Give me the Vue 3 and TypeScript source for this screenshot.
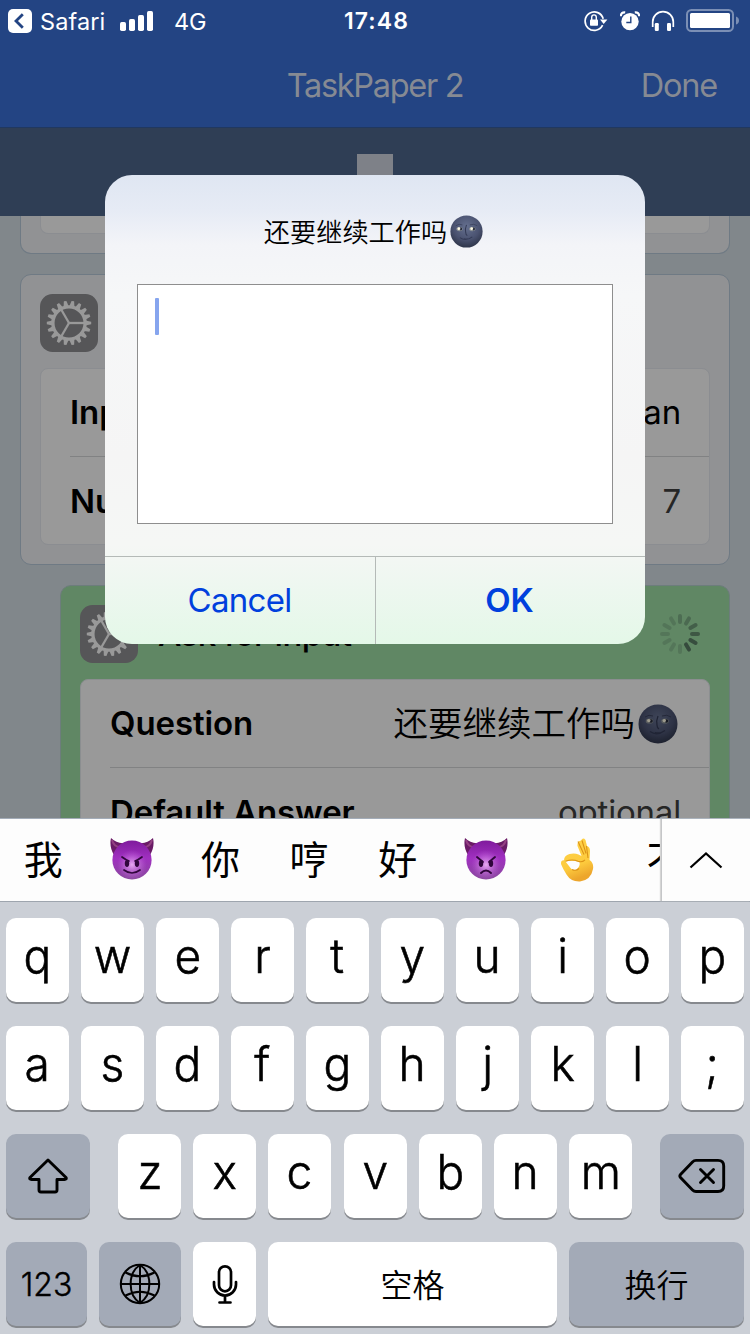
<script setup lang="ts">
const rowOne: string[] = 'qwertyuiop'.split('')
const rowTwo: string[] = 'asdfghjkl;'.split('')
const rowThree: string[] = 'zxcvbnm'.split('')

interface Candidate {
  kind: 'text' | 'devil' | 'imp' | 'hand'
  text?: string
}
const candidates: Candidate[] = [
  { kind: 'text', text: '我' },
  { kind: 'devil' },
  { kind: 'text', text: '你' },
  { kind: 'text', text: '哼' },
  { kind: 'text', text: '好' },
  { kind: 'imp' },
  { kind: 'hand' },
  { kind: 'text', text: '不' },
]

const toothAngles: number[] = Array.from({ length: 18 }, (_, i) => i * 20)
const spokeAngles: number[] = [0, 120, 240]
const spinner: { angle: number; opacity: number }[] = [
  0.32, 0.36, 0.5, 0.6, 0.72, 0.75, 0.2, 0.2, 0.2, 0.2, 0.22, 0.22,
].map((opacity, i) => ({ angle: i * 30, opacity }))
</script>

<template>
  <div class="screen">
    <svg class="defs" width="0" height="0">
      <defs>
        <radialGradient id="moonFill" cx="50%" cy="35%" r="62%">
          <stop offset="0" stop-color="#65708f" />
          <stop offset="0.65" stop-color="#4a5270" />
          <stop offset="1" stop-color="#32394f" />
        </radialGradient>
        <linearGradient id="devilFill" x1="0" y1="0" x2="0" y2="1">
          <stop offset="0" stop-color="#7f1a9c" />
          <stop offset="0.45" stop-color="#a030c0" />
          <stop offset="1" stop-color="#8a4a9e" />
        </linearGradient>
        <radialGradient id="devilGlow" cx="50%" cy="62%" r="38%">
          <stop offset="0" stop-color="#ecb0f5" stop-opacity="0.95" />
          <stop offset="1" stop-color="#c060dc" stop-opacity="0" />
        </radialGradient>
        <linearGradient id="handFill" x1="0" y1="0" x2="0.3" y2="1">
          <stop offset="0" stop-color="#ffd34a" />
          <stop offset="0.7" stop-color="#fdcb3e" />
          <stop offset="1" stop-color="#eda62c" />
        </linearGradient>
        <symbol id="moon" viewBox="0 0 40 40">
          <circle cx="20" cy="20" r="19.5" fill="url(#moonFill)" />
          <path d="M20 12q-2 5-1 9q0 3 2 4M12 27.500q7 5 15-1M17 29h5" fill="none" stroke="#333a55" stroke-width="1.3" />
          <ellipse cx="11.500" cy="17" rx="3.800" ry="2.600" fill="#8f9598" />
          <ellipse cx="27" cy="17" rx="3.800" ry="2.600" fill="#8f9598" />
          <circle cx="13" cy="17" r="1.800" fill="#252a3a" />
          <circle cx="28.500" cy="17" r="1.800" fill="#252a3a" />
          <circle cx="10.800" cy="16.600" r="1.700" fill="#fffbe5" />
          <circle cx="26.300" cy="16.600" r="1.700" fill="#fffbe5" />
          <path d="M7 13q4-3 8-1M24 12q5-2 9 1" fill="none" stroke="#3a415c" stroke-width="1" />
        </symbol>
        <symbol id="devilHead" viewBox="0 0 44 42">
          <path d="M1 0q6 6 14 5L4 17Q-1 9 1 0ZM43 0q-6 6-14 5l11 12Q45 9 43 0Z" fill="#6a1b66" />
          <path d="M2 2q2 7 8 7M42 2q-2 7-8 7" stroke="#934082" stroke-width="2" fill="none" />
          <circle cx="22" cy="22" r="19.6" fill="url(#devilFill)" />
          <circle cx="22" cy="22" r="19.6" fill="url(#devilGlow)" />
          <ellipse cx="17" cy="25.500" rx="2.200" ry="3.400" fill="#30063c" />
          <ellipse cx="27" cy="25.500" rx="2.200" ry="3.400" fill="#30063c" />
        </symbol>
      </defs>
    </svg>

    <header class="status">
      <div class="status-left">
        <svg class="back" width="24" height="24" viewBox="0 0 24 24">
          <rect width="24" height="24" rx="5" fill="#fff" />
          <path d="M14.8 5.2L8 12l6.8 6.8" fill="none" stroke="#234483" stroke-width="2.8" />
        </svg>
        <span class="safari">Safari</span>
        <svg class="signal" width="34" height="20" viewBox="0 0 34 20" fill="#fff">
          <rect x="0" y="11" width="6" height="9" rx="1.7" />
          <rect x="9" y="8" width="6" height="12" rx="1.7" />
          <rect x="18" y="4" width="6" height="16" rx="1.7" />
          <rect x="27" y="0" width="6" height="20" rx="1.7" />
        </svg>
        <span class="net">4G</span>
      </div>
      <span class="clock">17:48</span>
      <div class="status-right">
        <svg class="lock" width="24" height="22" viewBox="0 0 24 22">
          <path d="M18.6 15.2A9.2 9.2 0 1 1 19.2 8.8" fill="none" stroke="#fff" stroke-width="1.7" />
          <path d="M16 9.6h7.4L19.7 14Z" fill="#fff" />
          <rect x="6" y="9.6" width="8" height="6.2" rx="0.8" fill="#fff" />
          <path d="M7.7 10V7.2a2.3 2.3 0 0 1 4.6 0V10" fill="none" stroke="#fff" stroke-width="1.4" />
        </svg>
        <svg class="alarm" width="20" height="20" viewBox="0 0 20 20">
          <circle cx="10" cy="10.6" r="8.7" fill="#fff" />
          <path d="M.8 5.2Q1 1 5.2 1.4M19.2 5.2Q19 1 14.8 1.4" stroke="#fff" stroke-width="2.2" fill="none" />
          <path d="M10.8 5.5v6H6.3" fill="none" stroke="#234483" stroke-width="1.4" />
        </svg>
        <svg class="phones" width="24" height="22" viewBox="0 0 24 22">
          <path d="M1.7 17V12a10.2 10.2 0 0 1 20.6 0v5" fill="none" stroke="#fff" stroke-width="1.7" />
          <rect x="3.8" y="13" width="4" height="8" rx="1.2" fill="#fff" />
          <rect x="16" y="13" width="4" height="8" rx="1.2" fill="#fff" />
        </svg>
        <svg class="battery" width="54" height="24" viewBox="0 0 54 24">
          <rect x="1" y="1" width="46" height="21" rx="4.5" fill="none" stroke="#7b8fb5" stroke-width="2" />
          <rect x="4" y="4" width="40" height="15" rx="1.5" fill="#fff" />
          <path d="M50 7.5q3 1 3 4t-3 4Z" fill="#7b8fb5" />
        </svg>
      </div>
    </header>

    <nav class="nav">
      <span class="nav-title">TaskPaper 2</span>
      <span class="done">Done</span>
    </nav>
    <div class="band"><div class="stop"></div></div>

    <main class="content">
      <section class="card card-cut"><div class="panel panel-cut"></div></section>

      <section class="card">
        <div class="card-head">
          <svg class="gear" width="58" height="58" viewBox="-29 -29 58 58">
            <rect x="-29" y="-29" width="58" height="58" rx="12.5" fill="#565658" />
            <circle r="16.1" fill="none" stroke="#999" stroke-width="3.3" />
            <path v-for="a in toothAngles" :key="a" d="M16.5-2.6L22.2-1.300V1.300L16.5 2.6Z" fill="#999" :transform="`rotate(${a})`" />
            <path v-for="a in spokeAngles" :key="a" d="M0 0H15" stroke="#999" stroke-width="2.300" :transform="`rotate(${a})`" />
          </svg>
        </div>
        <div class="panel">
          <div class="field"><b>Input</b><span class="black">Mean</span></div>
          <div class="field"><b>Number</b><span>7</span></div>
        </div>
      </section>

      <section class="card running">
        <div class="card-head">
          <svg class="gear" width="58" height="58" viewBox="-29 -29 58 58">
            <rect x="-29" y="-29" width="58" height="58" rx="12.5" fill="#565658" />
            <circle r="16.1" fill="none" stroke="#999" stroke-width="3.3" />
            <path v-for="a in toothAngles" :key="a" d="M16.5-2.6L22.2-1.300V1.300L16.5 2.6Z" fill="#999" :transform="`rotate(${a})`" />
            <path v-for="a in spokeAngles" :key="a" d="M0 0H15" stroke="#999" stroke-width="2.300" :transform="`rotate(${a})`" />
          </svg>
          <span class="action">Ask for Input</span>
          <svg class="spinner" width="40" height="40" viewBox="-20 -20 40 40">
            <path v-for="s in spinner" :key="s.angle" d="M0-12V-18" stroke="#283830" stroke-width="4" stroke-linecap="round" :opacity="s.opacity" :transform="`rotate(${s.angle})`" />
          </svg>
        </div>
        <div class="panel">
          <div class="field">
            <b>Question</b>
            <span class="black cjk">还要继续工作吗<svg class="moon-lg" width="40" height="40"><use href="#moon" /></svg></span>
          </div>
          <div class="field"><b>Default Answer</b><span>optional</span></div>
        </div>
      </section>
    </main>

    <div class="keyboard">
      <div class="bar">
        <div class="candidates">
          <div v-for="(c, i) in candidates" :key="i" class="cand">
            <span v-if="c.kind === 'text'">{{ c.text }}</span>
            <svg v-else-if="c.kind === 'hand'" class="hand" width="34" height="44" viewBox="0 0 34 44">
              <path d="M21 2.500q2-3.500 4.500-.5l1.500 6q3 1 3 5l-.5 9q4.500 3 3.500 9q-2 11-13 12.500q-9 .5-13.500-7Q3 31 1.200 26.500Q.3 22 4 22.300q.2-5 5.500-6.300q5-1.300 9 .5l3 1.500-4-10q-.5-5 3.500-5.500Z" fill="url(#handFill)" />
              <path d="M5.500 23.500q6-1.500 14 .5q1 4-3 7.500q-4 1.500-6-1.500Z" fill="#fdfdfd" />
              <path d="M18 3.500l6 13M22 2.500l4 13M26.500 8l1.500 12M5.500 23.300q7-2.500 12.500 0q4 1.500 7-1.500M12 31.500q4 2 7-1" fill="none" stroke="#dc9418" stroke-width="1.100" />
            </svg>
            <svg v-else class="devil" width="44" height="42" viewBox="0 0 44 42">
              <use href="#devilHead" />
              <path v-if="c.kind === 'devil'" d="M12 19q4 3 7 4M32 19q-4 3-7 4M14 32q8 6 16 0" fill="none" stroke="#30063c" stroke-width="1.7" stroke-linecap="round" />
              <path v-else d="M13 19l6 5M31 19l-6 5M17 35q5-5 10 0" fill="none" stroke="#30063c" stroke-width="1.9" stroke-linecap="round" />
            </svg>
          </div>
        </div>
        <div class="expand">
          <svg width="34" height="18" viewBox="0 0 34 18"><path d="M1.5 16.5L17 2.5l15.500 14" fill="none" stroke="#000" stroke-width="2.200" /></svg>
        </div>
      </div>
      <div class="keys">
        <div class="krow"><div v-for="k in rowOne" :key="k" class="key"><span class="letter">{{ k }}</span></div></div>
        <div class="krow"><div v-for="k in rowTwo" :key="k" class="key"><span class="letter">{{ k }}</span></div></div>
        <div class="krow spread">
          <div class="key dark shift">
            <svg width="40" height="36" viewBox="0 0 40 36">
              <path d="M20 2L38 19.500Q39 21.500 36.500 21.500H29V32q0 2-2 2H13q-2 0-2-2V21.500H3.500Q1 21.500 2 19.500Z" fill="none" stroke="#000" stroke-width="2.900" stroke-linejoin="round" />
            </svg>
          </div>
          <div class="middle"><div v-for="k in rowThree" :key="k" class="key"><span class="letter">{{ k }}</span></div></div>
          <div class="key dark shift">
            <svg width="48" height="36" viewBox="0 0 48 36">
              <path d="M18 2.400H40Q45.700 2.400 45.700 8V28Q45.700 33.500 40 33.500H18Q16 33.500 14.500 32L2.500 19.500Q1.200 18 2.500 16.500L14.500 4Q16 2.400 18 2.400Z" fill="none" stroke="#000" stroke-width="2.900" />
              <path d="M22.500 11.500L35.500 24.500M35.500 11.500L22.500 24.500" stroke="#000" stroke-width="2.900" stroke-linecap="round" />
            </svg>
          </div>
        </div>
        <div class="krow">
          <div class="key dark num">123</div>
          <div class="key dark globe">
            <svg width="42" height="42" viewBox="0 0 42 42" fill="none" stroke="#000" stroke-width="2">
              <circle cx="21" cy="21" r="19.200" />
              <path d="M21 2V40M2 21H40" />
              <path d="M21 2C8.500 10 8.500 32 21 40M21 2C33.500 10 33.500 32 21 40M6.500 9.500Q21 17 35.500 9.500M6.500 32.500Q21 25 35.500 32.500" />
            </svg>
          </div>
          <div class="key">
            <svg width="26" height="42" viewBox="0 0 26 42" fill="none" stroke="#000" stroke-width="2.700">
              <rect x="7" y="3.300" width="12" height="25" rx="6" />
              <path d="M2 19V21.500a11 11 0 0 0 22 0V19M13 32.500V39M7.500 39.500H18.500" stroke-linecap="round" />
            </svg>
          </div>
          <div class="key word space">空格</div>
          <div class="key word dark return">换行</div>
        </div>
      </div>
    </div>

    <div class="dialog">
      <div class="message">还要继续工作吗<svg class="moon-sm" width="33" height="33"><use href="#moon" /></svg></div>
      <div class="input"><div class="caret"></div></div>
      <div class="buttons">
        <div class="btn cancel">Cancel</div>
        <div class="btn ok">OK</div>
      </div>
    </div>
  </div>
</template>

<style>
body { margin: 0; }
</style>

<style scoped>
* { box-sizing: border-box; }
svg { display: block; flex: none; }
.screen {
  position: relative;
  display: flex;
  flex-direction: column;
  width: 750px;
  height: 1334px;
  overflow: hidden;
  background: #81878b;
  font-family: Inter, "Noto Sans CJK SC", sans-serif;
  font-size: 33px;
  color: #000;
}
.defs { position: absolute; }
.status {
  display: grid;
  grid-template-columns: 1fr auto 1fr;
  height: 40px;
  align-items: center;
  padding: 0 10px 0 8px;
  background: #234483;
  color: #fff;
  font-size: 23.5px;
}
.status-left, .status-right { display: flex; align-items: center; height: 42px; }
.status-right { justify-content: flex-end; }
.safari { margin-left: 8px; width: 65px; white-space: nowrap; letter-spacing: 0.1px; }
.signal { margin-left: 15px; }
.net { margin-left: 20px; letter-spacing: -0.3px; }
.clock { padding-left: 5px; font-weight: 600; font-size: 23px; letter-spacing: 1.1px; }
.alarm { margin-left: 12px; }
.lock { margin-right: 0; }
.phones { margin-left: 11px; }
.battery { margin-left: 11px; }
.nav {
  display: grid;
  grid-template-columns: 1fr auto 1fr;
  align-items: center;
  height: 88px;
  padding: 0 33px 0 33px;
  border-bottom: 1px solid #203860;
  background: #234483;
  color: #868a93;
  font-size: 32.500px;
  line-height: 91px;
}
.nav-title { grid-column: 2; letter-spacing: -1.300px; }
.done { justify-self: end; letter-spacing: -1.200px; }
.band { display: flex; justify-content: center; height: 88px; padding-top: 26px; background: #2f3e55; }
.stop { width: 36px; height: 36px; background: #7e8188; }
.content { display: flex; flex-direction: column; gap: 20px; height: 602px; padding: 0 20px; overflow: hidden; }
.card { flex: none; padding: 0 19px 19px; border: 1px solid #6f7a84; border-radius: 11px; background: #919294; }
.card-cut { height: 38px; border-top: 0; border-radius: 0 0 11px 11px; }
.panel { border: 1px solid #8b8d91; border-radius: 8px; background: #999; }
.panel-cut { height: 18px; border-top: 0; border-radius: 0 0 8px 8px; }
.card-head { display: flex; align-items: center; height: 93px; padding-top: 2px; }
.field { display: flex; justify-content: space-between; height: 87px; margin-left: 29px; padding-right: 28px; line-height: 87px; color: #262626; white-space: nowrap; letter-spacing: -0.2px; }
.field + .field { height: 88px; border-top: 1px solid #818283; line-height: 89px; }
.field b { color: #000; font-weight: 600; letter-spacing: -0.1px; }
.field .black { color: #000; }
.running { margin-left: 40px; background: #608764; border-color: #6d7d7c; }
.running .panel { border-color: #8b8e90; }
.action { margin-left: 20px; font-weight: 500; letter-spacing: -0.65px; }
.spinner { margin-left: auto; margin-right: 10px; }
.cjk { display: flex; align-items: center; font-size: 34.500px; font-weight: 350; letter-spacing: 0; line-height: 84px; }
.moon-lg { margin-left: 3px; margin-right: 3px; filter: brightness(0.62); }
.keyboard { display: flex; flex-direction: column; height: 516px; background: #cbcfd6; }
.bar { display: flex; height: 84px; border-top: 1px solid #a3acb8; border-bottom: 1px solid #9ea5ae; background: #fdfdfd; }
.candidates { display: flex; width: 661px; overflow: hidden; }
.cand { display: flex; flex: none; align-items: center; justify-content: center; width: 88.600px; font-size: 39px; line-height: 82px; }
.cand:first-child { margin-left: -1px; }
.cand:last-child { padding-left: 5px; }
.devil { margin-top: -3px; }
.hand { margin-left: 5px; }
.expand { display: flex; flex: 1; align-items: center; justify-content: center; border-left: 1px solid #c5c6c8; box-shadow: -1px 0 1px #d5d5d5; }
.keys { display: flex; flex-direction: column; gap: 22px; padding: 16px 6px 0; }
.krow { display: flex; gap: 12px; height: 86px; }
.spread { justify-content: space-between; }
.middle { display: flex; gap: 12.170px; }
.key {
  display: flex;
  flex: none;
  justify-content: center;
  width: 63px;
  height: 84px;
  border-radius: 10px;
  background: #fff;
  box-shadow: 0 2px 0 #86898e;
  font-size: 48px;
  font-weight: 300;
  line-height: 75px;
}
.letter { transform: scaleX(0.96); -webkit-text-stroke: 0.6px #000; }
.key svg { align-self: center; }
.dark { background: #a3aab7; }
.shift { width: 84px; }
.num { width: 81px; font-size: 32px; font-weight: 300; line-height: 85px; -webkit-text-stroke: 0.4px #000; }
.globe { width: 82px; }
.word { font-size: 32px; line-height: 88px; font-weight: 350; }
.space { width: 289px; }
.return { width: 175px; }
.dialog {
  position: absolute;
  left: 105px;
  top: 175px;
  display: flex;
  flex-direction: column;
  width: 540px;
  height: 469px;
  border-radius: 27px;
  overflow: hidden;
  background: linear-gradient(#dfe6f2 0, #e6ebf5 35px, #f3f4f8 70px, #f6f7f8 120px, #f5f5f5 280px, #f5f7f5 370px, #eef7f0 410px, #e4f8e8 469px);
}
.message { display: flex; align-items: center; justify-content: center; height: 109px; padding: 3px 3px 0 0; font-size: 26.200px; font-weight: 350; }
.moon-sm { margin-left: 3px; }
.input { flex: none; width: 476px; height: 240px; margin-left: 32px; padding: 13px 17px; border: 1px solid #8e8e8e; background: #fff; }
.caret { width: 4px; height: 37px; border-radius: 1px; background: #86a5ee; }
.buttons { display: grid; grid-template-columns: 270px 270px; height: 88px; margin-top: 32px; border-top: 1px solid #b4bab7; }
.btn { text-align: center; color: #0040dd; line-height: 87px; }
.cancel { padding-right: 1px; letter-spacing: -0.7px; }
.ok { border-left: 1px solid #b4bab7; padding-right: 2px; font-weight: 600; }
</style>
